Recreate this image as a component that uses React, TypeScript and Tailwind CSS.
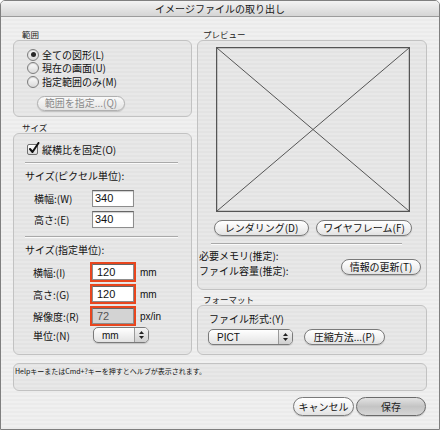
import React from "react";

const stripe =
  "bg-[image:repeating-linear-gradient(to_bottom,#f0f0f0_0px,#f0f0f0_2px,#ebebeb_2px,#ebebeb_4px)]";

function Radio({ checked, label }: { checked?: boolean; label: string }) {
  return (
    <div className="flex items-center h-[13.5px]">
      <div className="w-[12px] h-[12px] rounded-full border border-[#7d7d7d] bg-gradient-to-b from-[#fdfdfd] to-[#d9d9d9] flex items-center justify-center shadow-[inset_0_1px_1px_rgba(0,0,0,0.15)]">
        {checked && <div className="w-[5px] h-[5px] rounded-full bg-[#2a2a2a]" />}
      </div>
      <span className="ml-[3px] text-[10px] leading-[12px] text-[#111]">{label}</span>
    </div>
  );
}

function Btn({
  label,
  w,
  h = 16,
  disabled,
  def,
}: {
  label: string;
  w: string;
  h?: number;
  disabled?: boolean;
  def?: boolean;
}) {
  const base =
    "flex items-center justify-center rounded-full border text-[10px] leading-none shrink-0 shadow-[0_1px_1px_rgba(0,0,0,0.15)]";
  const skin = def
    ? "border-[#6a6a6a] bg-gradient-to-b from-[#e2e2e2] via-[#c4c4c4] to-[#d6d6d6] text-[#222]"
    : disabled
    ? "border-[#b0b0b0] bg-gradient-to-b from-[#fafafa] to-[#e4e4e4] text-[#8a8a8a]"
    : "border-[#7a7a7a] bg-gradient-to-b from-[#ffffff] via-[#f3f3f3] to-[#e2e2e2] text-[#111]";
  return (
    <div className={`${base} ${skin} ${w}`} style={{ height: h }}>
      {label}
    </div>
  );
}

function Popup({ label, w }: { label: string; w: string }) {
  return (
    <div
      className={`${w} h-[16px] rounded-[5px] border border-[#7a7a7a] bg-gradient-to-b from-[#ffffff] to-[#e3e3e3] flex shrink-0 shadow-[0_1px_1px_rgba(0,0,0,0.15)]`}
    >
      <div className="flex-1 flex items-center pl-[8px] text-[10px] text-[#111] font-['Liberation_Sans',sans-serif]">
        {label}
      </div>
      <div className="w-[14px] border-l border-[#9a9a9a] rounded-r-[4px] bg-gradient-to-b from-[#f4f4f4] to-[#cfcfcf] flex flex-col items-center justify-center gap-[2px]">
        <svg width="5" height="3" viewBox="0 0 5 3">
          <path d="M0 3 L2.5 0 L5 3 Z" fill="#222" />
        </svg>
        <svg width="5" height="3" viewBox="0 0 5 3">
          <path d="M0 0 L2.5 3 L5 0 Z" fill="#222" />
        </svg>
      </div>
    </div>
  );
}

function Sep({ cls }: { cls: string }) {
  return <div className={`h-[2px] border-t border-[#a9a9a9] border-b border-b-[#fafafa] ${cls}`} />;
}

function Field({ value }: { value: string }) {
  return (
    <div className="w-[42px] h-[17px] border border-[#8d8d8d] border-t-[#666] bg-white shadow-[inset_0_1px_1px_rgba(0,0,0,0.2)] pl-[2px] text-[11px] leading-[15px] text-[#111] font-['Liberation_Sans',sans-serif]">
      {value}
    </div>
  );
}

function RedField({ value, disabled }: { value: string; disabled?: boolean }) {
  return (
    <div className="w-[46px] h-[20px] border-2 border-[#e8461e] p-0">
      <div
        className={`w-full h-full border border-[#8d8d8d] border-t-[#666] ${
          disabled ? "bg-[#d3d3d3] text-[#555]" : "bg-white text-[#111]"
        } pl-[4px] text-[11px] leading-[14px] font-['Liberation_Sans',sans-serif]`}
      >
        {value}
      </div>
    </div>
  );
}

const groupBox = "rounded-[6px] border border-[#c2c2c2] bg-black/[0.03]";

export default function App() {
  return (
    <div className="w-[440px] h-[432px] bg-white font-['Noto_Sans_CJK_JP','Noto_Sans',sans-serif]">
      <div
        className={`w-[440px] h-[430px] border border-[#7f7f7f] rounded-t-[5px] overflow-hidden flex flex-col ${stripe}`}
      >
        <div className="h-[16px] shrink-0 border-b border-[#9c9c9c] bg-gradient-to-b from-[#f3f3f3] to-[#d5d5d5] text-center text-[10px] leading-[15px] text-[#1a1a1a]">
          イメージファイルの取り出し
        </div>

        <div className="flex gap-[5px] px-[12px] pt-[11px]">
          {/* Left column */}
          <div className="w-[179px] flex flex-col">
            <div className="h-[12px] leading-[12px] text-[8.5px] pl-[9px] text-[#222]">範囲</div>
            <div className={`${groupBox} h-[77px] pt-[7px] pl-[13px]`}>
              <Radio checked label="全ての図形(L)" />
              <Radio label="現在の画面(U)" />
              <Radio label="指定範囲のみ(M)" />
              <div className="mt-[7px] ml-[10px]">
                <Btn label="範囲を指定...(Q)" w="w-[88px]" h={15} disabled />
              </div>
            </div>

            <div className="mt-[4px] h-[12px] leading-[12px] text-[8.5px] pl-[9px] text-[#222]">サイズ</div>
            <div className={`${groupBox} h-[222px] flex flex-col`}>
              <div className="mt-[9px] ml-[13px] h-[12px] flex items-center">
                <div className="w-[11px] h-[11px] border border-[#6e6e6e] rounded-[2px] bg-gradient-to-b from-[#ffffff] to-[#dadada] relative">
                  <svg
                    className="absolute left-[0px] top-[-3px]"
                    width="12"
                    height="13"
                    viewBox="0 0 12 13"
                  >
                    <path
                      d="M2 7 L4.5 10 L10.5 1"
                      stroke="#111"
                      strokeWidth="2"
                      fill="none"
                      strokeLinecap="round"
                      strokeLinejoin="round"
                    />
                  </svg>
                </div>
                <span className="ml-[4px] text-[10px] text-[#111]">縦横比を固定(O)</span>
              </div>
              <Sep cls="mt-[7px] ml-[11px] w-[153px]" />
              <div className="mt-[6px] ml-[11px] h-[12px] leading-[12px] text-[10px] text-[#111]">
                サイズ(ピクセル単位):
              </div>
              <div className="mt-[8px] flex items-center">
                <div className="w-[78px] pl-[20px] text-[10px] text-[#111]">横幅:(W)</div>
                <Field value="340" />
              </div>
              <div className="mt-[4px] flex items-center">
                <div className="w-[78px] pl-[20px] text-[10px] text-[#111]">高さ:(E)</div>
                <Field value="340" />
              </div>
              <Sep cls="mt-[8px] ml-[11px] w-[153px]" />
              <div className="mt-[6px] ml-[11px] h-[12px] leading-[12px] text-[10px] text-[#111]">
                サイズ(指定単位):
              </div>
              <div className="mt-[6px] flex items-center">
                <div className="w-[76px] pl-[19px] text-[10px] text-[#111]">横幅:(I)</div>
                <RedField value="120" />
                <span className="ml-[4px] text-[10px] text-[#111] font-['Liberation_Sans',sans-serif]">mm</span>
              </div>
              <div className="mt-[2px] flex items-center">
                <div className="w-[76px] pl-[19px] text-[10px] text-[#111]">高さ:(G)</div>
                <RedField value="120" />
                <span className="ml-[4px] text-[10px] text-[#111] font-['Liberation_Sans',sans-serif]">mm</span>
              </div>
              <div className="mt-[2px] flex items-center">
                <div className="w-[76px] pl-[19px] text-[10px] text-[#111]">解像度:(R)</div>
                <RedField value="72" disabled />
                <span className="ml-[4px] text-[10px] text-[#111] font-['Liberation_Sans',sans-serif]">px/in</span>
              </div>
              <div className="mt-[1px] flex items-center">
                <div className="w-[79px] pl-[19px] text-[10px] text-[#111]">単位:(N)</div>
                <Popup label="mm" w="w-[56px]" />
              </div>
            </div>
          </div>

          {/* Right column */}
          <div className="w-[230px] flex flex-col">
            <div className="h-[12px] leading-[12px] text-[8.5px] pl-[6px] text-[#222]">プレビュー</div>
            <div className={`${groupBox} h-[250px] flex flex-col`}>
              <div className="mt-[6px] ml-[18px] w-[194px] h-[165px] border border-[#555] shadow-[inset_0_0_0_1px_rgba(0,0,0,0.15)] relative">
                <svg
                  className="absolute inset-0"
                  width="100%"
                  height="100%"
                  viewBox="0 0 192 163"
                  preserveAspectRatio="none"
                >
                  <line x1="0" y1="0" x2="192" y2="163" stroke="#555" strokeWidth="1" />
                  <line x1="192" y1="0" x2="0" y2="163" stroke="#555" strokeWidth="1" />
                </svg>
              </div>
              <div className="mt-[8px] ml-[16px] flex gap-[7px]">
                <Btn label="レンダリング(D)" w="w-[95px]" />
                <Btn label="ワイヤフレーム(F)" w="w-[96px]" />
              </div>
              <Sep cls="mt-[7px] ml-[13px] w-[191px]" />
              <div className="mt-[5px] flex">
                <div className="pl-[1px] flex flex-col gap-[3px]">
                  <div className="h-[12px] leading-[12px] text-[10px] text-[#111]">必要メモリ(推定):</div>
                  <div className="h-[12px] leading-[12px] text-[10px] text-[#111]">ファイル容量(推定):</div>
                </div>
                <div className="ml-auto mr-[5px] mt-[9px]">
                  <Btn label="情報の更新(T)" w="w-[80px]" />
                </div>
              </div>
            </div>
            <div className="mt-[3px] h-[12px] leading-[12px] text-[8.5px] pl-[6px] text-[#222]">フォーマット</div>
            <div className={`${groupBox} h-[50px] flex flex-col`}>
              <div className="mt-[7px] ml-[11px] h-[12px] leading-[12px] text-[10px] text-[#111]">
                ファイル形式:(Y)
              </div>
              <div className="mt-[4px] ml-[10px] flex items-center">
                <Popup label="PICT" w="w-[85px]" />
                <div className="ml-[11px]">
                  <Btn label="圧縮方法...(P)" w="w-[81px]" />
                </div>
              </div>
            </div>
          </div>
        </div>

        <div className={`mt-[8px] mx-[12px] h-[28px] ${groupBox} pt-[3px] pl-[1px] text-[7px] leading-[9px] text-[#111]`}>
          HelpキーまたはCmd+?キーを押すとヘルプが表示されます。
        </div>

        <div className="mt-[6px] flex justify-end gap-[2px] pr-[13px]">
          <Btn label="キャンセル" w="w-[61px]" h={19} />
          <Btn label="保存" w="w-[70px]" h={19} def />
        </div>
      </div>
    </div>
  );
}
